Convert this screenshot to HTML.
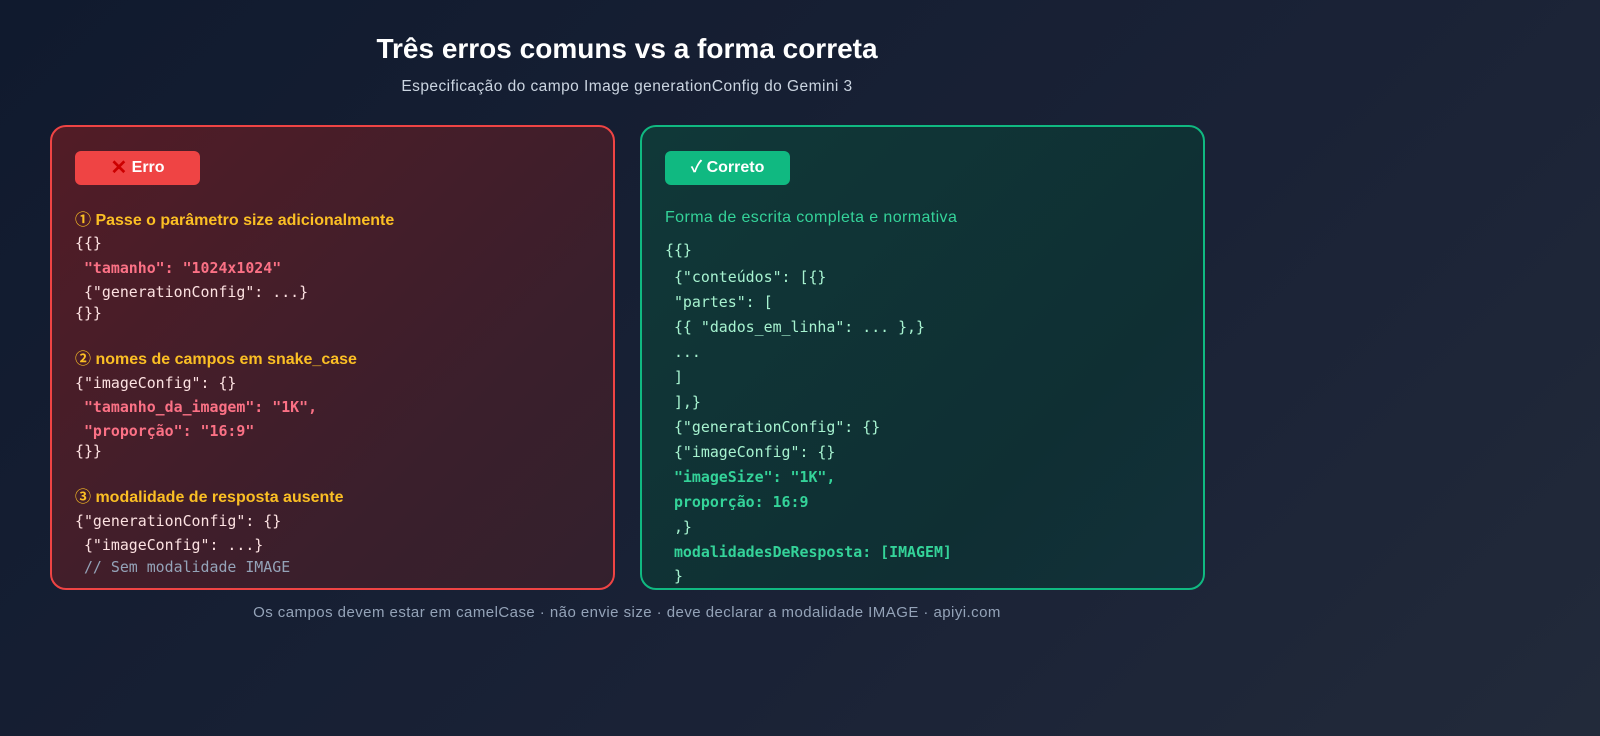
<!DOCTYPE html>
<html><head><meta charset="utf-8"><style>
*{margin:0;padding:0;box-sizing:border-box}
body{width:1600px;height:736px;overflow:hidden;background:linear-gradient(135deg,#101a2e 0%,#1a2236 60%,#222a3a 100%);font-family:"Liberation Sans","Noto Sans CJK SC",sans-serif;position:relative;color:#fff}
.t{position:absolute;white-space:nowrap}
.box{position:absolute;top:125px;width:565px;height:465px;border-radius:16px;border:2px solid}
.l{left:50px;border-color:#ef4444;background:linear-gradient(135deg,#521c26,#3a1f2c 70%,#33202d)}
.r{left:640px;border-color:#10b981;background:linear-gradient(135deg,#103838,#0f2f33 70%,#13303a)}
.badge{position:absolute;top:151px;width:125px;height:34px;border-radius:6px;font-weight:bold;font-size:16px;color:#fff;text-align:center;line-height:34px}
.m{font-family:"DejaVu Sans Mono","Liberation Mono",monospace;font-size:14.9px;transform:translateY(-50%)}
.h{font-size:16px;font-weight:bold;transform:translateY(-50%)}
.lc{color:#fde2e2}.pk{color:#fb7185;font-weight:bold}.gr{color:#a7f3d0}.gb{color:#34d399;font-weight:bold}
</style></head><body>
<div class="t" style="left:0;width:1254px;text-align:center;top:33px;font-size:28px;font-weight:bold">Três erros comuns vs a forma correta</div>
<div class="t" style="left:0;width:1254px;text-align:center;top:78px;font-size:15.5px;letter-spacing:0.45px;color:#cbd5e1">Especificação do campo Image generationConfig do Gemini 3</div>
<div class="box l"></div><div class="box r"></div>
<div class="badge" style="left:75px;background:#ef4444"><span style="color:#c00;font-size:20px;vertical-align:-2px">✕</span> Erro</div>
<div class="badge" style="left:665px;background:#10b981">✓ Correto</div>
<div class="t h" style="left:75px;top:218px;color:#fbbf24">① Passe o parâmetro size adicionalmente</div>
<div class="t m lc" style="left:75px;top:243px">{{}</div>
<div class="t m pk" style="left:75px;top:268px">&nbsp;"tamanho": "1024x1024"</div>
<div class="t m lc" style="left:75px;top:292px">&nbsp;{"generationConfig": ...}</div>
<div class="t m lc" style="left:75px;top:313px">{}}</div>
<div class="t h" style="left:75px;top:357px;color:#fbbf24">② nomes de campos em snake_case</div>
<div class="t m lc" style="left:75px;top:383px">{"imageConfig": {}</div>
<div class="t m pk" style="left:75px;top:407px">&nbsp;"tamanho_da_imagem": "1K",</div>
<div class="t m pk" style="left:75px;top:431px">&nbsp;"proporção": "16:9"</div>
<div class="t m lc" style="left:75px;top:451px">{}}</div>
<div class="t h" style="left:75px;top:495px;color:#fbbf24">③ modalidade de resposta ausente</div>
<div class="t m lc" style="left:75px;top:521px">{"generationConfig": {}</div>
<div class="t m lc" style="left:75px;top:545px">&nbsp;{"imageConfig": ...}</div>
<div class="t m" style="left:75px;top:567px;color:#94a3b8">&nbsp;// Sem modalidade IMAGE</div>
<div class="t h" style="left:665px;top:218px;color:#34d399;font-weight:normal;letter-spacing:0.4px">Forma de escrita completa e normativa</div>
<div class="t m gr" style="left:665px;top:250px">{{}</div>
<div class="t m gr" style="left:665px;top:277px">&nbsp;{"conteúdos": [{}</div>
<div class="t m gr" style="left:665px;top:302px">&nbsp;"partes": [</div>
<div class="t m gr" style="left:665px;top:327px">&nbsp;{{ "dados_em_linha": ... },}</div>
<div class="t m gr" style="left:665px;top:352px">&nbsp;...</div>
<div class="t m gr" style="left:665px;top:377px">&nbsp;]</div>
<div class="t m gr" style="left:665px;top:402px">&nbsp;],}</div>
<div class="t m gr" style="left:665px;top:427px">&nbsp;{"generationConfig": {}</div>
<div class="t m gr" style="left:665px;top:452px">&nbsp;{"imageConfig": {}</div>
<div class="t m gb" style="left:665px;top:477px">&nbsp;"imageSize": "1K",</div>
<div class="t m gb" style="left:665px;top:502px">&nbsp;proporção: 16:9</div>
<div class="t m gr" style="left:665px;top:527px">&nbsp;,}</div>
<div class="t m gb" style="left:665px;top:552px">&nbsp;modalidadesDeResposta: [IMAGEM]</div>
<div class="t m gr" style="left:665px;top:576px">&nbsp;}</div>
<div class="t" style="left:0;width:1254px;text-align:center;top:604px;font-size:15px;letter-spacing:0.45px;color:#94a3b8">Os campos devem estar em camelCase · não envie size · deve declarar a modalidade IMAGE · apiyi.com</div>
</body></html>
